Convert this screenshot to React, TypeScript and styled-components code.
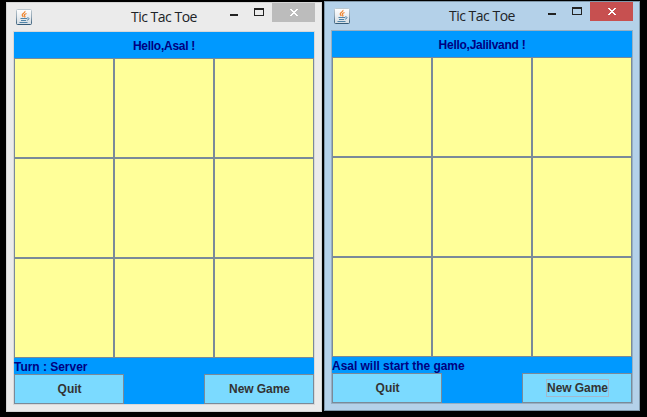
import React from "react";
import styled, { createGlobalStyle } from "styled-components";

const GlobalStyle = createGlobalStyle`
  * { box-sizing: border-box; }
  body { margin: 0; background: #000; overflow: hidden; }
`;

const Desktop = styled.main`
  display: flex;
  align-items: flex-start;
  gap: 2px;
  width: 647px;
  height: 417px;
  padding: 1px 0 0 6px;
  background: #000;
`;

const Frame = styled.section<{ $active?: boolean }>`
  display: flex;
  flex-direction: column;
  width: 316px;
  height: 410px;
  margin-top: ${(p) => (p.$active ? 0 : 1)}px;
  padding: 0 6px;
  background: ${(p) => (p.$active ? "#b4d1e9" : "#ebebeb")};
  border: 1px solid ${(p) => (p.$active ? "#8097a9" : "#d5d5d5")};
`;

const TitleBar = styled.header`
  display: grid;
  grid-template-columns: 19px 1fr 42px 43px;
  height: 28px;
  padding-left: 3px;
`;

const IconSlot = styled.div`
  padding-top: 6px;
  height: 28px;
  svg { display: block; }
`;

const Title = styled.h1`
  margin: 0;
  padding: 4px 0 0 96px;
  font: 400 14px/20px "Open Sans", sans-serif;
  letter-spacing: -0.5px;
  color: #202327;
  white-space: nowrap;
`;

const WindowControls = styled.div`
  height: 19px;
  svg { display: block; }
`;

const CloseButton = styled.div<{ $active?: boolean }>`
  height: 19px;
  background: ${(p) => (p.$active ? "#c75050" : "#bcbcbc")};
  svg { display: block; }
`;

const Client = styled.div<{ $active?: boolean }>`
  display: flex;
  flex-direction: column;
  width: 302px;
  height: 374px;
  border: 1px solid ${(p) => (p.$active ? "#96afc3" : "#d8d8d8")};
  background: #0099ff;
  font: bold 12px/16px "Liberation Sans", Arial, sans-serif;
  color: #000080;
`;

const Greeting = styled.div`
  height: 26px;
  padding-top: 6px;
  text-align: center;
  letter-spacing: -0.27px;
`;

const Board = styled.div`
  display: grid;
  grid-template: repeat(3, 100px) / repeat(3, 100px);
`;

const Cell = styled.div`
  background: #ffff99;
  border: 1px solid #7a8a99;
`;

const Status = styled.div`
  height: 16px;
  padding-top: 1px;
  letter-spacing: -0.03px;
  white-space: nowrap;
`;

const Actions = styled.div`
  display: flex;
  justify-content: space-between;
`;

const ActionButton = styled.div`
  display: flex;
  align-items: center;
  justify-content: center;
  width: 110px;
  height: 30px;
  padding-left: 1px;
  border: 1px solid #7a8a99;
  background: #7bdaff;
  color: #333;
`;

const Label = styled.span<{ $focused?: boolean }>`
  height: 18px;
  line-height: 17px;
  letter-spacing: -0.05px;
  border: 1px solid ${(p) => (p.$focused ? "#a3b8cc" : "transparent")};
`;

function JavaIcon({ id }: { id: string }) {
  return (
    <svg width="16" height="16" viewBox="0 0 16 16" fill="none">
      <defs>
        <linearGradient id={id} x2="0" y2="1">
          <stop stopColor="#ffffff" />
          <stop offset="1" stopColor="#d5dde3" />
        </linearGradient>
        <linearGradient id={`${id}-edge`} x2="0" y2="1">
          <stop stopColor="#bbc8d0" />
          <stop offset=".5" stopColor="#91a5b4" />
          <stop offset="1" stopColor="#355b78" />
        </linearGradient>
      </defs>
      <rect x=".5" y=".5" width="15" height="15" rx="1" fill={`url(#${id})`} stroke={`url(#${id}-edge)`} />
      <path d="M9 2c.5 2-3.3 2.4-2.8 4.2.1.6.8 1 1.1 1.8M10.5 4.5C8.7 5.2 7.5 6 8.7 7c.5.5.2.9-.3 1.4" stroke="#ef8127" strokeWidth="1.15" />
      <path d="M4.5 9.5H11M5 11.5h5M3.5 13.5H11.5M11 9c3-.7 2.5 2-.2 2.2" stroke="#5084a8" strokeWidth="1" />
    </svg>
  );
}

function Game({ player, status, active }: { player: string; status: string; active?: boolean }) {
  return (
    <Frame $active={active}>
      <TitleBar>
        <IconSlot><JavaIcon id={active ? "javaB" : "javaA"} /></IconSlot>
        <Title>Tic Tac Toe</Title>
        <WindowControls>
          <svg width="42" height="19" shapeRendering="crispEdges">
            <path d="M0 11h8v2H0z" fill="#222" />
            <path fillRule="evenodd" d="M24 5h10v8H24zM25 7v5h8V7z" fill="#222" />
          </svg>
        </WindowControls>
        <CloseButton $active={active}>
          <svg width="43" height="19" shapeRendering="crispEdges" fill="#fff">
            <path d="M18 6h2v1h1v1h2V7h1V6h2v1h-1v1h-1v1h-1v1h1v1h1v1h1v1h-2v-1h-1v-1h-2v1h-1v1h-2v-1h1v-1h1v-1h1V9h-1V8h-1V7h-1z" />
          </svg>
        </CloseButton>
      </TitleBar>
      <Client $active={active}>
        <Greeting>Hello,{player} !</Greeting>
        <Board>
          {Array.from({ length: 9 }, (_, i) => <Cell key={i} />)}
        </Board>
        <Status>{status}</Status>
        <Actions>
          <ActionButton><Label>Quit</Label></ActionButton>
          <ActionButton><Label $focused={active}>New Game</Label></ActionButton>
        </Actions>
      </Client>
    </Frame>
  );
}

export default function App() {
  return (
    <>
      <GlobalStyle />
      <Desktop>
        <Game player="Asal" status="Turn : Server" />
        <Game player="Jalilvand" status="Asal will start the game" active />
      </Desktop>
    </>
  );
}
